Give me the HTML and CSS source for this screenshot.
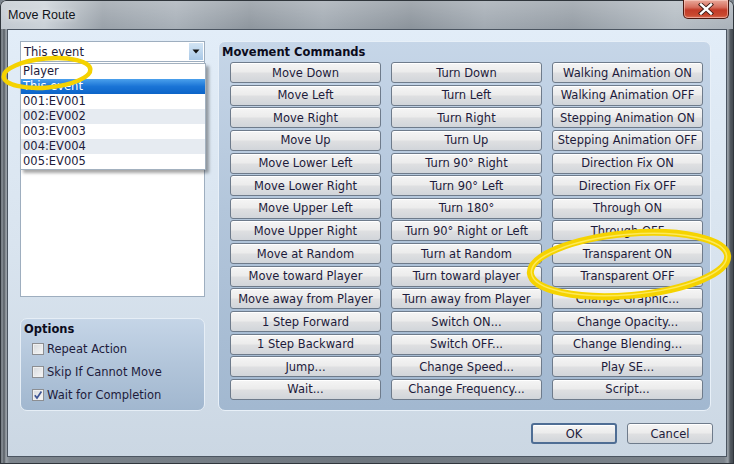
FILE: index.html
```html
<!DOCTYPE html>
<html>
<head>
<meta charset="utf-8">
<link rel="stylesheet" href="styles.css">
</head>
<body>
<div class="window">
  <div class="titlebar">
    <span class="title">Move Route</span>
    <button class="close" aria-label="Close">
      <svg width="16" height="12" viewBox="0 0 16 12"><path d="M3 1.5 L13 10.5 M13 1.5 L3 10.5" stroke="#3a1a14" stroke-width="4.2" stroke-linecap="square"/><path d="M3 1.5 L13 10.5 M13 1.5 L3 10.5" stroke="#ffffff" stroke-width="2.4" stroke-linecap="square"/></svg>
    </button>
  </div>
  <div class="client">
    <div class="left">
      <div class="combo">
        <span class="combo-text">This event</span>
        <span class="combo-arrow"><svg width="8" height="5" viewBox="0 0 8 5"><path d="M0.5 0.5 H7.5 L4 4.5 Z" fill="#111"/></svg></span>
      </div>
      <div class="listbox"></div>
      <div class="options">
        <div class="group-title">Options</div>
        <label class="check"><span class="box"></span>Repeat Action</label>
        <label class="check"><span class="box"></span>Skip If Cannot Move</label>
        <label class="check"><span class="box checked"><svg width="10" height="10" viewBox="0 0 10 10"><path d="M1.8 5.2 L4 8 L8.4 1.6" fill="none" stroke="#3d5494" stroke-width="1.7"/></svg></span>Wait for Completion</label>
      </div>
      <ul class="popup">
        <li>Player</li>
        <li class="selected">This event</li>
        <li>001:EV001</li>
        <li class="alt">002:EV002</li>
        <li>003:EV003</li>
        <li class="alt">004:EV004</li>
        <li>005:EV005</li>
      </ul>
    </div>
    <div class="commands">
      <div class="group-title cmd-title">Movement Commands</div>
      <div class="grid">
        <button class="cmd">Move Down</button>
        <button class="cmd">Move Left</button>
        <button class="cmd">Move Right</button>
        <button class="cmd">Move Up</button>
        <button class="cmd">Move Lower Left</button>
        <button class="cmd">Move Lower Right</button>
        <button class="cmd">Move Upper Left</button>
        <button class="cmd">Move Upper Right</button>
        <button class="cmd">Move at Random</button>
        <button class="cmd">Move toward Player</button>
        <button class="cmd">Move away from Player</button>
        <button class="cmd">1 Step Forward</button>
        <button class="cmd">1 Step Backward</button>
        <button class="cmd">Jump...</button>
        <button class="cmd">Wait...</button>
        <button class="cmd">Turn Down</button>
        <button class="cmd">Turn Left</button>
        <button class="cmd">Turn Right</button>
        <button class="cmd">Turn Up</button>
        <button class="cmd">Turn 90° Right</button>
        <button class="cmd">Turn 90° Left</button>
        <button class="cmd">Turn 180°</button>
        <button class="cmd">Turn 90° Right or Left</button>
        <button class="cmd">Turn at Random</button>
        <button class="cmd">Turn toward player</button>
        <button class="cmd">Turn away from Player</button>
        <button class="cmd">Switch ON...</button>
        <button class="cmd">Switch OFF...</button>
        <button class="cmd">Change Speed...</button>
        <button class="cmd">Change Frequency...</button>
        <button class="cmd">Walking Animation ON</button>
        <button class="cmd">Walking Animation OFF</button>
        <button class="cmd">Stepping Animation ON</button>
        <button class="cmd">Stepping Animation OFF</button>
        <button class="cmd">Direction Fix ON</button>
        <button class="cmd">Direction Fix OFF</button>
        <button class="cmd">Through ON</button>
        <button class="cmd">Through OFF</button>
        <button class="cmd">Transparent ON</button>
        <button class="cmd">Transparent OFF</button>
        <button class="cmd">Change Graphic...</button>
        <button class="cmd">Change Opacity...</button>
        <button class="cmd">Change Blending...</button>
        <button class="cmd">Play SE...</button>
        <button class="cmd">Script...</button>
      </div>
    </div>
    <div class="footer">
      <button class="btn default">OK</button>
      <button class="btn">Cancel</button>
    </div>
  </div>
  <svg class="annot" width="734" height="464" viewBox="0 0 734 464">
    <ellipse cx="47" cy="73" rx="43.5" ry="14.5" transform="rotate(-5 47 73)" fill="none" stroke="#f5d200" stroke-width="4.5"/>
    <ellipse cx="629" cy="264.5" rx="99" ry="31" transform="rotate(-5 629 264.5)" fill="none" stroke="#f5d300" stroke-width="7"/>
    <ellipse cx="629" cy="264.5" rx="98" ry="30" transform="rotate(-5 629 264.5)" fill="none" stroke="#fde95a" stroke-width="1.5"/>
  </svg>
</div>
</body>
</html>
```
FILE: styles.css
```css
html, body {
  margin: 0;
  padding: 0;
}
body {
  width: 734px;
  height: 464px;
  overflow: hidden;
  font-family: "DejaVu Sans", sans-serif;
  background: #7a838c;
}
.window {
  position: relative;
  width: 734px;
  height: 464px;
  box-sizing: border-box;
  display: flex;
  flex-direction: column;
  padding: 0 7px 7px 7px;
  border-radius: 6px 6px 0 0;
  background:
    linear-gradient(180deg, rgba(255,255,255,0.22), rgba(255,255,255,0) 28px) 0 0 / 100% 29px no-repeat,
    linear-gradient(90deg, #c2c9d0 0%, #cbd2d8 6%, #9aa2aa 14%, #a8b0b8 24%, #8f979f 34%, #a3abb3 44%, #8c949c 56%, #a2aab2 66%, #959da5 78%, #b4bcc3 92%, #aab2ba 100%) 0 0 / 100% 29px no-repeat,
    linear-gradient(90deg, #3d434a 0, #8e959c 2px, #555c63 4px, #9aa1a8 6px, #7d858d 10px, #6e767e 50%, #7d858d calc(100% - 10px), #9aa1a8 calc(100% - 6px), #555c63 calc(100% - 4px), #3d434a 100%);
  box-shadow: inset 0 0 0 1px #30363c;
}
.titlebar {
  height: 29px;
  display: flex;
  align-items: flex-start;
  justify-content: space-between;
}
.title {
  font-family: "Liberation Sans", sans-serif;
  font-size: 12.5px;
  color: #101418;
  margin-top: 8px;
  margin-left: 1px;
  text-shadow: 0 0 6px rgba(255,255,255,0.8);
}
.close {
  width: 46px;
  height: 19px;
  margin-right: -2px;
  padding: 0;
  border: 1px solid #4a1810;
  border-top: none;
  border-radius: 0 0 5px 5px;
  background: linear-gradient(180deg, #e9a99b 0%, #d66f5e 40%, #c23b28 55%, #c9492f 85%, #d9705a 100%);
  box-shadow: inset 0 0 0 1px rgba(255,220,210,0.5);
  display: flex;
  align-items: center;
  justify-content: center;
}
.client {
  flex: 1;
  border: 1px solid #4b5561;
  background: linear-gradient(180deg, #e2edf8 0%, #d9e4ef 50%, #cbd7e3 100%);
  display: grid;
  grid-template-columns: 185px 493px;
  grid-template-rows: 370px auto;
  column-gap: 13px;
  padding: 11px 0 0 12px;
}
.left {
  position: relative;
  display: flex;
  flex-direction: column;
}
.combo {
  height: 21px;
  box-sizing: border-box;
  border: 1px solid #9eaebf;
  background: #fff;
  display: flex;
  align-items: center;
  justify-content: space-between;
}
.combo-text {
  font-size: 11.5px;
  color: #1d1b3b;
  padding-left: 3px;
}
.combo-arrow {
  width: 14px;
  height: 17px;
  margin-right: 1px;
  background: linear-gradient(180deg, #d2e4f4, #a9c8e6);
  display: flex;
  align-items: center;
  justify-content: center;
}
.listbox {
  height: 235px;
  box-sizing: border-box;
  border: 1px solid #9eaebf;
  border-top: none;
  background: #fff;
}
.options {
  margin-top: 21px;
  height: 93px;
  box-sizing: border-box;
  border: 1px solid #e6eef6;
  border-radius: 7px;
  background: linear-gradient(180deg, #c5d5e7 0%, #b2c5da 50%, #a1b7cf 100%);
  padding: 3px 0 0 3px;
}
.group-title {
  font-size: 11.5px;
  font-weight: bold;
  color: #0c0c1c;
  height: 15px;
  line-height: 14px;
}
.check {
  height: 23px;
  display: flex;
  align-items: center;
  font-size: 11.5px;
  color: #1d1b3b;
  padding-left: 8px;
}
.box {
  width: 12px;
  height: 12px;
  box-sizing: border-box;
  border: 1px solid #8c8e92;
  background: linear-gradient(135deg, #d6d9dd, #f7f7f7);
  box-shadow: inset 0 0 0 1px #f0f0f0;
  margin-right: 3px;
  display: flex;
  align-items: center;
  justify-content: center;
}
.popup {
  position: absolute;
  left: 0;
  top: 22px;
  width: 186px;
  margin: 0;
  padding: 0;
  list-style: none;
  box-sizing: border-box;
  border: 1px solid #a3b1bf;
  background: #fff;
  box-shadow: 3px 3px 3px rgba(0,0,0,0.35);
}
.popup li {
  height: 15px;
  line-height: 15px;
  padding-left: 2px;
  font-size: 11.5px;
  color: #1d1b3b;
}
.popup li.alt {
  background: #e6ebf1;
}
.popup li.selected {
  color: #fff;
  background: linear-gradient(180deg, #4aa0ec, #1a74d6 50%, #0b64c8);
}
.commands {
  box-sizing: border-box;
  border: 1px solid #e8f0f8;
  border-radius: 7px;
  background: linear-gradient(180deg, #c6d6e8 0%, #b3c6db 45%, #a2b8d0 100%);
}
.cmd-title {
  height: 20px;
  box-sizing: border-box;
  padding: 3px 0 0 3px;
  line-height: 14px;
}
.grid {
  margin-left: 11px;
  display: grid;
  grid-auto-flow: column;
  grid-template-columns: repeat(3, 151px);
  grid-template-rows: repeat(15, 21px);
  column-gap: 10px;
  row-gap: 1.65px;
}
.cmd, .btn {
  font-family: "DejaVu Sans", sans-serif;
  font-size: 11.5px;
  color: #1d1b3b;
  padding: 0;
  border: 1px solid #6e7b8b;
  border-radius: 3px;
  background: linear-gradient(180deg, #f5f5f5 0%, #ececec 45%, #dedfe1 55%, #d1d5da 100%);
  box-shadow: inset 0 1px 0 #ffffff;
  white-space: nowrap;
}
.footer {
  grid-column: 1 / -1;
  display: flex;
  justify-content: flex-end;
  gap: 10px;
  margin-top: 12px;
  margin-right: -2px;
  align-items: flex-start;
}
.btn {
  width: 86px;
  height: 21px;
}
.btn.default {
  border: 2px solid #4e6d94;
}
.annot {
  position: absolute;
  left: 0;
  top: 0;
  pointer-events: none;
}
```
